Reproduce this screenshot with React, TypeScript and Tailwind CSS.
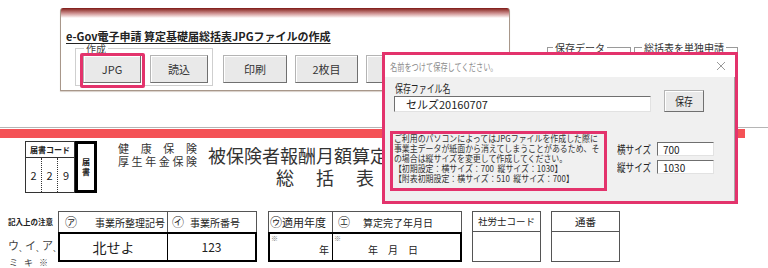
import type { ReactNode } from "react";

function Btn({ className, children }: { className: string; children: ReactNode }) {
  return (
    <div
      className={`flex h-[28px] items-center justify-center border border-[#b4b4b4] border-r-[#707070] border-b-[#707070] bg-[#e9e9e9] text-[11px] text-[#333] shadow-[inset_1px_1px_0_#ffffff] ${className}`}
    >
      {children}
    </div>
  );
}

export default function App() {
  return (
    <div className="relative h-[268px] w-[768px] overflow-hidden bg-white font-['Noto_Sans_CJK_JP',sans-serif] text-[#222]">
      {/* toolbar panel */}
      <div className="flex h-[127px] items-start">
        <div className="ml-[60px] mt-[8px] flex h-[83px] w-[450px] flex-col rounded-t-[3px] border-x border-b border-[#a8978a] bg-white shadow-[0_1px_1px_#d8cfc8]">
          <div className="h-[10px] rounded-t-[2px] bg-linear-to-b from-[#7d1414] via-[#c98a8a] to-white" />
          <div className="mt-[12px] whitespace-nowrap pl-[5px] text-[11px] font-bold leading-[12px] underline underline-offset-2">
            e-Gov電子申請 算定基礎届総括表JPGファイルの作成
          </div>
          <div className="mt-[6px] flex items-start pl-[14px]">
            <div className="relative h-[38px] w-[138px] border border-[#cfcfcf]">
              <span className="absolute -top-[5px] left-[8px] bg-white px-[2px] text-[10px] leading-[10px] text-[#444]">
                作成
              </span>
              <div className="flex gap-[9px] pl-[7px] pt-[6px]">
                <div className="relative">
                  <Btn className="w-[58px]">JPG</Btn>
                  <div className="absolute -bottom-[5px] -left-[3px] -right-[4px] -top-[2px] rounded-[2px] border-[3px] border-[#e3336c]" />
                </div>
                <Btn className="w-[58px]">読込</Btn>
              </div>
            </div>
            <div className="ml-[10px] mt-[7px] flex gap-[8px]">
              <Btn className="w-[64px]">印刷</Btn>
              <Btn className="w-[63px]">2枚目</Btn>
              <Btn className="w-[63px]">&nbsp;</Btn>
            </div>
          </div>
        </div>

        {/* group frames peeking above the dialog */}
        <div className="ml-[37px] mt-[47px] flex">
          <div className="relative h-[20px] w-[84px] border-x border-t border-[#9a9a9a]">
            <span className="absolute -top-[6px] left-[5px] bg-white px-[2px] text-[10px] leading-[11px] text-[#333]">
              保存データ
            </span>
          </div>
          <div className="relative ml-[3px] h-[20px] w-[104px] border-x border-t border-[#9a9a9a]">
            <span className="absolute -top-[6px] left-[7px] bg-white px-[2px] text-[10px] leading-[11px] text-[#333]">
              総括表を単独申請
            </span>
          </div>
        </div>
      </div>

      {/* divider */}
      <div className="h-px bg-[#b5b5b5]" />
      <div className="mt-px h-[9px] w-[745px] bg-[#f45256]" />

      {/* form header */}
      <div className="flex h-[73px] items-start">
        <div className="ml-[25px] mt-[3px] flex">
          <div className="h-[52px] w-[50px] border border-[#333]">
            <div className="flex h-[16px] items-center justify-center border-b border-[#333] text-[8px] font-bold leading-none">
              届書コード
            </div>
            <div className="flex h-[34px] text-[11px]">
              <div className="flex w-[16px] items-center justify-center border-r border-dotted border-[#333]">2</div>
              <div className="flex w-[16px] items-center justify-center border-r border-dotted border-[#333]">2</div>
              <div className="flex flex-1 items-center justify-center">9</div>
            </div>
          </div>
          <div className="flex h-[52px] w-[22px] flex-col items-center justify-center border-[3px] border-black text-[8px] font-bold leading-[10px]">
            <span>届</span>
            <span>書</span>
          </div>
        </div>

        <div className="ml-[21px] mt-[4px] w-[79px] text-[11px] leading-[13px] text-[#333]">
          <div className="flex justify-between">
            <span>健</span>
            <span>康</span>
            <span>保</span>
            <span>険</span>
          </div>
          <div className="flex justify-between">
            <span>厚</span>
            <span>生</span>
            <span>年</span>
            <span>金</span>
            <span>保</span>
            <span>険</span>
          </div>
        </div>

        <div className="ml-[11px] mt-[6px] whitespace-nowrap text-[18px] leading-[22px] text-[#333]">
          <div>被保険者報酬月額算定基礎届</div>
          <div className="flex gap-[22px] pl-[68px]">
            <span>総</span>
            <span>括</span>
            <span>表</span>
          </div>
        </div>
      </div>

      {/* form tables */}
      <div className="flex items-start">
        <div className="ml-[8px] w-[50px]">
          <div className="flex h-[21px] items-center whitespace-nowrap text-[7.5px] font-bold">記入上の注意</div>
          <div className="flex h-[26px] items-center text-[11px] leading-[14px] text-[#444]">
            <span>ウ</span>
            <span className="mt-[6px] w-[6px] text-[7px] leading-[8px]">、</span>
            <span>イ</span>
            <span className="mt-[6px] w-[6px] text-[7px] leading-[8px]">、</span>
            <span>ア</span>
            <span className="mt-[6px] w-[6px] text-[7px] leading-[8px]">、</span>
          </div>
          <div className="flex gap-[6px] pl-[1px] text-[9px] leading-[10px] text-[#444]">
            <span>ミ</span>
            <span>キ</span>
            <span>※</span>
          </div>
        </div>

        <div className="w-[199px]">
          <div className="flex h-[21px] border border-b-0 border-[#555] text-[10px]">
            <div className="flex w-[109px] items-center justify-between border-r border-[#555] pl-[6px] pr-[2px]">
              <span className="text-[12px]">㋐</span>
              <span>事業所整理記号</span>
            </div>
            <div className="flex flex-1 items-center gap-[6px] pl-[4px]">
              <span className="text-[12px]">㋑</span>
              <span>事業所番号</span>
            </div>
          </div>
          <div className="flex h-[30px] border-2 border-black">
            <div className="flex w-[108px] items-center justify-center border-r border-black text-[14px]">北せよ</div>
            <div className="flex flex-1 items-center justify-center text-[12px]">123</div>
          </div>
        </div>

        <div className="ml-[11px] w-[194px]">
          <div className="flex h-[21px] border border-b-0 border-[#555]">
            <div className="flex w-[64px] items-center border-r border-[#555] pl-[1px] text-[11px]">
              <span className="text-[12px]">㋒</span>
              <span>適用年度</span>
            </div>
            <div className="flex flex-1 items-center gap-[13px] pl-[5px] text-[10px]">
              <span className="text-[12px]">㋓</span>
              <span>算定完了年月日</span>
            </div>
          </div>
          <div className="flex h-[30px] border-2 border-black text-[10px]">
            <div className="flex w-[63px] flex-col border-r border-black">
              <span className="pl-[1px] text-[7px] leading-[9px] text-[#777]">※</span>
              <span className="self-end pr-[3px] leading-[14px]">年</span>
            </div>
            <div className="flex flex-1 flex-col">
              <span className="pl-[1px] text-[7px] leading-[9px] text-[#777]">※</span>
              <div className="flex gap-[10px] pl-[35px] leading-[14px]">
                <span>年</span>
                <span>月</span>
                <span>日</span>
              </div>
            </div>
          </div>
        </div>

        <div className="ml-[10px] w-[69px]">
          <div className="flex h-[21px] items-center justify-center border border-[#555] text-[9.5px]">社労士コード</div>
          <div className="h-[30px] border-x border-b border-[#555]" />
        </div>

        <div className="ml-[10px] w-[69px]">
          <div className="flex h-[21px] items-center justify-center border border-[#555] text-[10.5px]">通番</div>
          <div className="h-[30px] border-x border-b border-[#555]" />
        </div>
      </div>

      {/* save dialog */}
      <div className="absolute left-[382px] top-[52px] flex h-[152px] w-[356px] flex-col border-[3px] border-[#e3336c] bg-white">
        <div className="flex h-[22px] items-center justify-between pl-[5px] pr-[9px]">
          <span className="inline-block origin-left scale-x-[0.72] whitespace-nowrap text-[10px] text-[#8c8c8c]">
            名前をつけて保存してください。
          </span>
          <svg width="10" height="10" viewBox="0 0 10 10" className="text-[#9a9a9a]">
            <path d="M1 1L9 9M9 1L1 9" stroke="currentColor" strokeWidth="1" />
          </svg>
        </div>
        <div className="flex flex-1 flex-col border-r border-[#a9a9a9] bg-[#f0f0f0] text-[#222]">
          <div className="flex items-start">
            <div className="pl-[9px] pt-[5px]">
              <div className="h-[12px] pl-[1px] text-[11px] leading-[12px]">
                <span className="inline-block origin-left scale-x-[0.72] whitespace-nowrap">保存ファイル名</span>
              </div>
              <div className="mt-[2px] flex h-[16px] w-[257px] items-center border border-[#e2e2e2] border-l-[#6f6f6f] border-t-[#6f6f6f] bg-white pl-[11px] text-[11px]">
                セルズ20160707
              </div>
            </div>
            <div className="ml-[13px] mt-[13px] flex h-[22px] w-[40px] items-center justify-center border border-[#b4b4b4] border-b-[#707070] border-r-[#707070] bg-[#e9e9e9] text-[11px] shadow-[inset_1px_1px_0_#ffffff]">
              <span className="inline-block scale-x-[0.8]">保存</span>
            </div>
          </div>

          <div className="mt-[19px] flex items-start">
            <div className="ml-[5px] h-[60px] w-[217px] overflow-hidden border-[3px] border-[#e3336c]">
              <div className="w-[240px] origin-top-left scale-x-[0.88] whitespace-pre pl-[1px] text-[9px] leading-[10px] text-[#333]">
                <div>ご利用のパソコンによってはJPGファイルを作成した際に</div>
                <div>事業主データが紙面から消えてしまうことがあるため、そ</div>
                <div>の場合は縦サイズを変更して作成してください。</div>
                <div>【初期設定：横サイズ：700  縦サイズ：1030】</div>
                <div>【附表初期設定：横サイズ：510  縦サイズ：700】</div>
              </div>
            </div>
            <div className="ml-[10px] mt-[11px] flex flex-col gap-[4px] text-[11px]">
              <div className="flex h-[14px] items-center">
                <span className="w-[40px] whitespace-nowrap">
                  <span className="inline-block origin-left scale-x-[0.78]">横サイズ</span>
                </span>
                <div className="flex h-[14px] w-[57px] items-center border border-[#e2e2e2] border-l-[#6f6f6f] border-t-[#6f6f6f] bg-white pl-[5px] text-[10px]">
                  700
                </div>
              </div>
              <div className="flex h-[14px] items-center">
                <span className="w-[40px] whitespace-nowrap">
                  <span className="inline-block origin-left scale-x-[0.78]">縦サイズ</span>
                </span>
                <div className="flex h-[14px] w-[57px] items-center border border-[#e2e2e2] border-l-[#6f6f6f] border-t-[#6f6f6f] bg-white pl-[5px] text-[10px]">
                  1030
                </div>
              </div>
            </div>
          </div>
        </div>
      </div>
    </div>
  );
}
